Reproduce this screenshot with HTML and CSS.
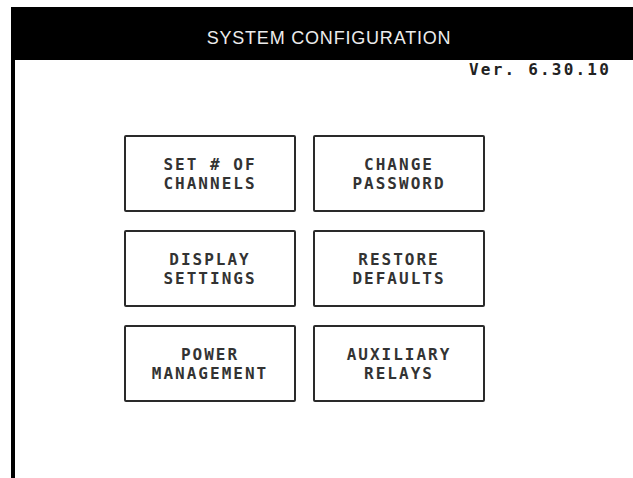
FILE: index.html
```html
<!DOCTYPE html>
<html lang="en">
<head>
    <meta charset="UTF-8">
    <meta name="viewport" content="width=device-width, initial-scale=1.0">
    <title>System Configuration</title>
    <link rel="stylesheet" href="styles.css">
</head>
<body>
    <div class="screen">
        <header class="title-bar">
            <h1>SYSTEM CONFIGURATION</h1>
        </header>
        <div class="version">Ver. 6.30.10</div>
        <div class="menu">
            <button class="menu-btn">SET # OF<br>CHANNELS</button>
            <button class="menu-btn">CHANGE<br>PASSWORD</button>
            <button class="menu-btn">DISPLAY<br>SETTINGS</button>
            <button class="menu-btn">RESTORE<br>DEFAULTS</button>
            <button class="menu-btn">POWER<br>MANAGEMENT</button>
            <button class="menu-btn">AUXILIARY<br>RELAYS</button>
        </div>
    </div>
</body>
</html>
```

FILE: styles.css
```css
body {
    margin: 0;
    padding: 0;
    background-color: white;
    color: black;
    font-family: "DejaVu Sans Mono", monospace;
}
.screen {
    margin: 7px 0 0 11px;
    height: 471px;
    border-left: 4px solid black;
}
.title-bar {
    background-color: black;
    color: white;
    height: 53px;
    display: flex;
    align-items: center;
    justify-content: center;
    padding-top: 10px;
    box-sizing: border-box;
}
.title-bar h1 {
    margin: 0 0 0 10px;
    font-family: "Liberation Sans", Arial, sans-serif;
    font-weight: normal;
    font-size: 18px;
    letter-spacing: 0.8px;
    color: #ececec;
}
.version {
    text-align: right;
    font-size: 16px;
    font-weight: bold;
    line-height: 18px;
    letter-spacing: 2.2px;
    padding: 1px 22px 0 0;
    color: #222;
}
.menu {
    display: grid;
    grid-template-columns: repeat(2, 172px);
    grid-auto-rows: 77px;
    gap: 18px 17px;
    margin: 56px 0 0 109px;
}
.menu-btn {
    background-color: white;
    border: 2px solid #2a2a2a;
    border-radius: 2px;
    font-family: "DejaVu Sans Mono", monospace;
    font-size: 16px;
    font-weight: bold;
    line-height: 19px;
    letter-spacing: 2px;
    color: #333;
    padding: 0;
    cursor: pointer;
}
```
